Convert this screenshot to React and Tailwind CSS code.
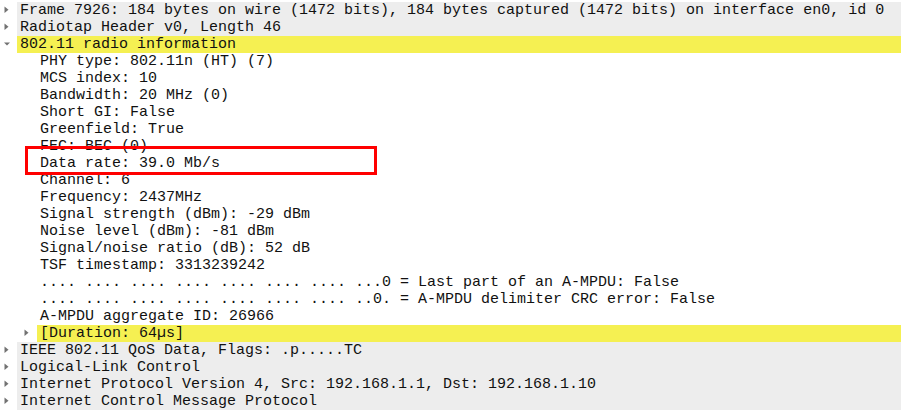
import React from "react"

const rows = [
	{ depth: 0, arrow: "right", bg: "gray", text: "Frame 7926: 184 bytes on wire (1472 bits), 184 bytes captured (1472 bits) on interface en0, id 0" },
	{ depth: 0, arrow: "right", bg: "gray", text: "Radiotap Header v0, Length 46" },
	{ depth: 0, arrow: "down", bg: "yellow", text: "802.11 radio information" },
	{ depth: 1, text: "PHY type: 802.11n (HT) (7)" },
	{ depth: 1, text: "MCS index: 10" },
	{ depth: 1, text: "Bandwidth: 20 MHz (0)" },
	{ depth: 1, text: "Short GI: False" },
	{ depth: 1, text: "Greenfield: True" },
	{ depth: 1, text: "FEC: BEC (0)" },
	{ depth: 1, text: "Data rate: 39.0 Mb/s" },
	{ depth: 1, text: "Channel: 6" },
	{ depth: 1, text: "Frequency: 2437MHz" },
	{ depth: 1, text: "Signal strength (dBm): -29 dBm" },
	{ depth: 1, text: "Noise level (dBm): -81 dBm" },
	{ depth: 1, text: "Signal/noise ratio (dB): 52 dB" },
	{ depth: 1, text: "TSF timestamp: 3313239242" },
	{ depth: 1, text: ".... .... .... .... .... .... .... ...0 = Last part of an A-MPDU: False" },
	{ depth: 1, text: ".... .... .... .... .... .... .... ..0. = A-MPDU delimiter CRC error: False" },
	{ depth: 1, text: "A-MPDU aggregate ID: 26966" },
	{ depth: 1, arrow: "right", bg: "yellow", text: "[Duration: 64µs]" },
	{ depth: 0, arrow: "right", bg: "gray", text: "IEEE 802.11 QoS Data, Flags: .p.....TC" },
	{ depth: 0, arrow: "right", bg: "gray", text: "Logical-Link Control" },
	{ depth: 0, arrow: "right", bg: "gray", text: "Internet Protocol Version 4, Src: 192.168.1.1, Dst: 192.168.1.10" },
	{ depth: 0, arrow: "right", bg: "gray", text: "Internet Control Message Protocol" },
]

function Arrow({ dir }) {
	if (dir === "down") {
		return (
			<svg width="17" height="17" viewBox="0 0 17 17">
				<path d="M4 6.5 L10 6.5 L7 9.5 Z" fill="#727272" />
			</svg>
		)
	}
	if (dir === "right") {
		return (
			<svg width="17" height="17" viewBox="0 0 17 17">
				<path d="M4.5 4.5 L8.5 7.8 L4.5 11 Z" fill="#727272" />
			</svg>
		)
	}
	return <span className="w-[17px]" />
}

export default function App() {
	return (
		<div className="relative w-[901px] h-[414px] bg-white overflow-hidden pt-[2px] text-[15px] text-[#111] font-['Liberation_Mono',monospace]">
			{rows.map((row, i) => (
				<div key={i} className={"flex h-[17px] items-center " + (row.depth === 1 ? "pl-[20px]" : "")}>
					<div className="flex w-[17px] h-[17px] shrink-0">
						<Arrow dir={row.arrow} />
					</div>
					<div
						className={
							"flex-1 h-[17px] leading-[17px] pl-[3px] whitespace-pre " +
							(row.bg === "gray" ? "bg-[#ededed]" : row.bg === "yellow" ? "bg-[#f5f052]" : "")
						}
					>
						{row.text}
					</div>
				</div>
			))}
			<div className="absolute left-[25px] top-[146px] w-[352px] h-[29px] border-[3px] border-[#ff0000]" />
		</div>
	)
}
